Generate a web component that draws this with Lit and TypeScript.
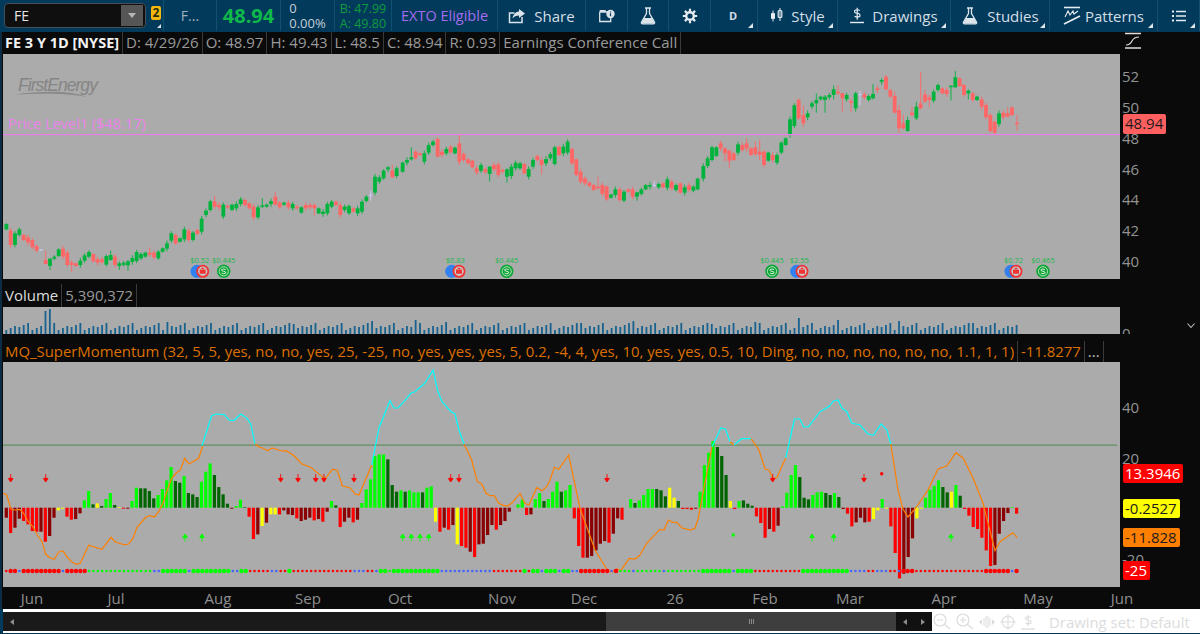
import { LitElement, html, css, svg } from 'lit';
import { customElement } from 'lit/decorators.js';

// candles: [X, open, close, hi?, lo?] read in 3x coords, split in 3 stretches
type C = number[];
const candlesA: C[] = [[19,508,492],[32,512,555],[45,555,520],[58,525,508],[71,525,540],[84,532,548],[97,540,562],[110,558,572],[123,570,570],[137,600,612,572,614],[150,618,596,594,630],[163,596,590],[176,588,568],[189,566,590],[202,578,615],[215,608,615,600,636],[228,610,618],[241,615,602],[254,602,586],[267,590,576],[280,582,604],[293,598,608],[306,598,606],[319,614,588],[332,600,585,572,602],[345,590,615],[358,618,610,604,630],[371,615,608],[384,616,604,600,632],[397,606,594],[410,603,576],[423,595,582],[436,590,578],[449,578,584,562,590],[462,578,592],[475,595,575],[488,575,565],[501,566,550],[514,542,520],[527,525,550],[540,545,535],[553,538,508],[566,512,540],[579,540,518],[592,510,522],[605,515,476],[618,465,452],[631,450,424],[644,424,440,408,446],[657,435,442],[670,470,434],[683,438,442],[696,450,434],[709,445,432],[722,432,418],[735,420,435],[748,430,445],[761,440,472],[774,472,442],[787,440,436,414,444],[800,440,434],[813,432,424],[826,410,434,396,436],[839,428,442],[852,434,428],[865,428,442],[878,445,432],[891,440,445],[904,458,442],[917,435,445],[930,435,442],[943,435,445,430,466],[956,460,445],[969,462,455],[982,460,432],[995,440,425],[1008,425,435],[1021,435,465],[1034,450,440],[1047,460,438],[1060,445,455],[1073,460,445],[1086,455,425],[1099,423,410],[1112,406,406,392,422],[1125,398,350],[1138,365,352],[1151,355,332],[1164,328,322,318,336],[1177,332,352,314,354],[1190,348,325]];
const candlesB: C[] = [[8,215,188],[21,188,180],[34,178,172,142,182],[47,155,175],[60,160,165],[73,185,160],[86,158,135],[99,135,125],[113,117,170,112,172],[126,155,165],[139,160,147],[152,140,157],[165,160,143],[178,130,185,105,195],[191,162,180],[204,178,190],[217,182,202],[230,205,217],[243,212,195],[256,207,217],[269,222,200,198,245],[282,195,208],[295,193,225],[308,210,215],[321,230,208,205,248],[334,228,200],[347,205,188],[360,205,190],[373,192,220],[386,230,207],[399,200,180],[412,168,180],[425,180,195,170,224],[438,190,177],[451,175,162],[464,192,142],[477,140,165],[490,160,140],[503,158,125],[516,147,190],[529,178,225],[542,215,245],[555,235,250],[568,248,258],[581,255,270],[594,260,265,230,268],[607,255,282],[620,260,298],[633,293,284],[646,285,268],[659,268,300],[672,302,275],[685,268,275],[698,268,290],[711,290,277,275,302],[724,282,268],[737,268,255],[750,260,255],[763,256,256,242,262],[776,262,252],[789,250,262],[802,263,238],[815,245,265],[828,270,255],[841,250,278],[854,278,262],[867,255,270],[880,272,260],[893,268,236],[910,236,198],[923,198,175],[936,180,142],[949,168,142],[962,130,145],[975,145,160,142,185],[988,152,182,150,205],[1001,160,180],[1014,158,133],[1027,135,150],[1040,130,145,115,155],[1053,145,165],[1066,142,162,125,170],[1079,155,165,120,180],[1092,155,195,150,203],[1105,182,158],[1118,165,180],[1131,188,165],[1144,158,128],[1157,135,115],[1170,105,58],[1183,78,16],[1196,0,55]];
const candlesC: C[] = [[10,165,190,136,200],[23,172,160],[36,140,130],[49,130,120,100,158],[62,118,110],[75,120,110,105,158],[88,112,105],[101,105,88,76,118],[114,95,100,75,105],[127,100,115,98,155],[140,118,105],[153,123,128,115,155],[167,145,100,95,155],[180,104,104,92,136],[193,103,112],[206,120,108],[219,115,102,72,118],[232,85,90],[245,65,60,54,74],[258,50,88,46,90],[271,90,110],[284,108,158,95,160],[297,150,205,135,218],[310,190,205,165,210],[323,213,180,170,215],[336,158,165,140,170],[349,175,140,125,180],[362,130,145,35,148],[375,103,125,90,128],[388,112,120,105,142],[401,122,95],[414,90,75,70,95],[427,85,100],[440,90,102],[453,79,77,76,122],[466,82,52,33,84],[479,55,78],[492,75,105,72,110],[505,100,92,88,118],[518,100,120],[531,120,110],[545,118,140,110,150],[558,135,172],[571,165,213],[584,185,218,182,222],[597,192,160],[610,158,172],[623,160,170,142,172],[636,142,165],[651,188,192,165,212]];

// momentum histogram, 3x px from the zero line
const histRaw = `M-30 R-76 M-60 M-33 R-40 R-50 R-70 R-72 M-72 R-102 M-85 M-30 Y-8 Y-3 R-27 R-36 M-34 M-17 G22 G50 D10 Y13 D5 G26 G44 D8 Y2 R-3 M-3 G20 G60 D58 D58 D50 D28 G38 G56 G82 G122 D80 D75 G95 D44 D40 D32 G78 G108 G133 D98 D62 D40 D12 M-3 G5 G24 D2 R-27 R-94 M-80 Y-55 M-45 Y-20 Y-20 R-20 M-8 M-20 M-22 R-32 M-40 M-36 M-30 R-38 M-34 R-42 M-12 G20 D7 R-58 M-42 M-30 R-44 M-36 G14 G55 G85 G155 G160 G160 D145 D68 D48
G52 D48 G52 G46 G46 D46 G60 G64 Y-42 R-72 M-60 R-66 M-52 Y-110 R-115 R-120 M-132 R-148 M-110 M-108 M-82 M-52 R-66 M-52 M-40 M-12 G0 G10 G24 R-22 M-20 G26 G44 D20 G26 G48 G78 D48 G52 G68 R-32 R-115 R-150 M-150 M-145 M-128 M-108 M-100 R-105 M-78 M-32 R-36 G0 G26 D14 G22 G38 G56 G56 D56 D52 D34 Y60 Y30 D20 R-4 R-4 R-6 M-3 G48 G128 G165 G200 D182 D155 D98 Y20 R-4 G20 D22 D12 D6 R-26 R-46 R-90 M-64 R-72 M-54 G4 G45 G98 G128 D92
D30 D25 G38 G46 G48 D44 D38 G44 D32 M-4 R-18 R-56 M-44 M-30 M-44 R-42 Y-34 Y-8 G26 Y-3 R-56 R-136 R-212 M-198 M-148 M-92 Y-32 Y-3 G30 G54 G66 G82 D62 D46 Y48 G68 D36 R-4 R-24 R-58 R-64 R-90 R-128 R-175 M-172 M-78 M-40 M-16 G2 R-18`;
const histColors: Record<string, string> = { G: '#00ff00', D: '#006400', R: '#ff0000', M: '#8b0000', Y: '#ffff00' };
const hist = histRaw.trim().split(/\s+/).map((t) => ({ c: histColors[t[0]], v: Number(t.slice(1)) / 3 }));
const barX = (i: number, n: number) => 6.3 + (i * (1016.6 - 6.3)) / (n - 1);

const dotRuns = 'r1R2b1R9b1R5g15b2G6b1G9b2G2r5b2r2G1r14b3r2b1G2g1G2G9b12r7G1r1G2b1G3b1G2b2R7b1R1g3b1g6b1g8G7b1G4r11G11b4r2b3r1r1b1R3r16R6b1R1';
const dots: string[] = [];
for (const m of dotRuns.matchAll(/([a-zA-Z])(\d+)/g)) for (let i = 0; i < Number(m[2]); i++) dots.push(m[1]);

const z4 = (p: number[][]) => p.map(([x, y]) => `${(x / 3).toFixed(1)},${(440 + y / 3).toFixed(1)}`).join(' ');
const pts = (p: number[][]) => p.map(([x, y]) => `${x},${y}`).join(' ');

const orange = [
  z4([[10,160],[20,165],[33,208],[45,210],[60,208],[72,222],[85,245],[100,262],[112,285],[126,305],[137,343],[150,353],[163,358],[176,336],[189,333],[202,352],[215,365],[228,373],[241,370],[266,316],[306,328],[333,292],[346,306],[372,314],[385,313],[398,296],[411,262],[437,232],[450,227],[463,231],[476,215],[489,190],[502,150],[515,115],[528,100],[541,90],[554,55],[567,72],[596,55],[608,18]]),
  z4([[765,10],[775,20],[790,25],[803,32],[816,24],[845,33],[858,32],[880,45],[906,72],[932,82],[975,117],[997,88],[1012,90],[1027,138],[1050,143],[1065,162],[1077,165],[1115,75]]),
  pts([[464,444],[471.7,460],[477.3,481.7],[481.7,484],[486,493.3],[490,495.7],[494.3,495.7],[498.7,503.3],[503.3,505.3],[507.3,506],[511.7,503.3],[520,493.3],[524.7,503.3],[529,505],[536.7,487.7],[542,490.7],[546.7,486.7],[550,480],[554.3,467.3],[558.7,469.3],[568.7,455],[580,508.3],[595,550],[607.3,570],[612,572],[617,569],[620.7,570.7],[629.3,558.3],[635,559],[640,555],[646.7,543.3],[660,529.3],[664,530],[668.3,520],[672.7,522.3],[676.7,522.3],[682,528],[690.7,530],[695,528.3],[698.3,518.3],[701.7,500],[712,446.7]]),
  pts([[730,441.7],[734,445]]),
  pts([[751,438.7],[759,450],[765,469],[769,470],[772.7,478],[776.7,478],[785.7,458]]),
  pts([[890.8,444],[898,490],[903,509],[908,517],[915,509],[928,490],[938,469],[946.7,466],[956,452.7],[963,458],[973,478],[983,503],[995,550.7],[1000,541.7],[1012.7,532.7],[1017.3,537.7]]),
];
const cyan = [
  pts([[202,445.7],[211.6,415.7],[216,414],[224,414.7],[229.6,420.3],[234,420.3],[241,414],[247,418.3],[250.7,424],[254.9,444]]),
  pts([[371.7,465],[375,448],[379,428],[390,400.7],[394,408],[398,408],[404,401.7],[411,393],[415,391.7],[425,383],[433,370],[438,391.7],[442,401.7],[451,411.7],[455,414],[459,430],[464,444]]),
  pts([[712,446.7],[721,428],[725.5,429],[730,441.7]]),
  pts([[734,445],[741.6,438.7],[751,438.7]]),
  pts([[785.7,458],[788,448],[794.4,419],[799.8,419],[803.6,427],[808.6,426.7],[820,411.7],[829.6,406],[833.4,401],[838,400],[841.9,408],[846.8,411.7],[851.8,423],[860,425],[867.9,434],[873.6,435],[881,424],[887,430],[890.8,444]]),
];

const redArrows = [10.7, 45.7, 280.7, 298, 315.7, 324, 354, 450.7, 459, 607, 772.7, 864];
const greenArrows = [185, 202, 402.7, 411.3, 420, 428.7, 812, 833.7, 951];

const events = [
  { x: 197, red: 202.7, label: '$0.52' },
  { x: 223.7, label: '$0.445' },
  { x: 451.7, red: 459, label: '$0.83' },
  { x: 506.7, label: '$0.445' },
  { x: 772, label: '$0.445' },
  { x: 796.7, red: 802, label: '$2.55' },
  { x: 1011, red: 1016, label: '$0.72' },
  { x: 1043, label: '$0.465' },
];

const volSpikes: Record<number, number> = { 9: 23, 10: 25, 37: 12, 66: 10, 84: 13, 94: 14, 101: 12, 132: 11, 144: 13, 162: 10, 172: 12, 182: 16, 191: 14, 205: 13, 222: 11 };
const volumes = Array.from({ length: 233 }, (_, i) => volSpikes[i] ?? 4 + ((i * 37) % 6) + ((i * 13) % 3));

const flask = svg`<path d="M6 1h6M7.5 1.5v5L2.5 15a1.2 1.2 0 0 0 1 1.8h11a1.2 1.2 0 0 0 1-1.8l-5-8.5v-5" fill="none" stroke="#dbe4ea" stroke-width="1.3"/><path d="M5 11h8l2.3 4.6a.6.6 0 0 1-.5.9H3.2a.6.6 0 0 1-.5-.9z" fill="#dbe4ea"/>`;

@customElement('app-root')
export class AppRoot extends LitElement {
  static styles = css`
    :host {
      display: block;
      width: 1200px;
      height: 634px;
      overflow: hidden;
      background: #023a5c;
      font-family: 'Open Sans', sans-serif;
    }
    svg { display: block; }
    svg text { font-family: 'Open Sans', sans-serif; }
    svg .logo { font-family: 'Liberation Sans', sans-serif; }

    /* toolbar */
    .toolbar {
      display: grid;
      grid-template-columns: 164px 53px 64px 54px 57px 106px 88px 42px 41px 42px 47px 80px 113px 99px 108px 42px;
      height: 32px;
      padding-bottom: 1px;
      box-sizing: border-box;
      background: #023a5c;
      color: #d5dfe6;
      font-size: 15px;
    }
    .cell {
      position: relative;
      display: flex;
      align-items: center;
      justify-content: center;
      gap: 8px;
      border-right: 1px solid #11506f;
      white-space: nowrap;
    }
    .tight { gap: 4px; }
    .corner::after {
      content: '';
      position: absolute;
      right: 4px;
      bottom: 3px;
      border-style: solid;
      border-width: 0 0 5px 5px;
      border-color: transparent transparent #dfe6ea transparent;
    }
    .first { justify-content: flex-start; padding-left: 4px; gap: 5px; }
    .combo {
      display: flex;
      align-items: center;
      justify-content: space-between;
      width: 142px;
      height: 25px;
      box-sizing: border-box;
      padding: 0 2px 0 9px;
      background: #0f0f0f;
      border: 1px solid #46505a;
      border-radius: 4px;
      color: #e4e4e4;
      font-size: 14px;
    }
    .combo i {
      display: flex;
      align-items: center;
      justify-content: center;
      width: 22px;
      height: 21px;
      background: #565656;
    }
    .combo i::before {
      content: '';
      border-style: solid;
      border-width: 5px 4px 0 4px;
      border-color: #b5b5b5 transparent transparent transparent;
    }
    .link {
      width: 10px;
      height: 14px;
      margin-bottom: 5px;
      background: #f2b90c;
      border-radius: 2px;
      color: #2c2c10;
      font-size: 12px;
      font-weight: 700;
      line-height: 14px;
      text-align: center;
    }
    .first.corner::after { right: 2px; bottom: 3px; border-width: 0 0 4px 4px; }
    .fname { color: #9db1bf; font-size: 14px; }
    .last { color: #0fb84a; font-size: 20px; font-weight: 700; }
    .stack {
      display: flex;
      flex-direction: column;
      justify-content: center;
      line-height: 15px;
      font-size: 13px;
    }
    .chg { color: #c4ced5; align-items: flex-start; }
    .bidask { color: #0d9c3d; font-size: 12.5px; }
    .exto { color: #a46cf0; font-size: 14.5px; }
    .day { font-size: 11px; font-weight: 700; margin-right: 2px; }

    /* panes */
    .main {
      height: 577px;
      padding-left: 1px;
      border-left: 2px solid #0c2c44;
      background: #0a0a0a;
    }
    .pane {
      display: grid;
      grid-template-columns: 1117px 80px;
    }
    .vol-pane { margin-top: 5px; }
    .study-pane { margin-top: 2px; }
    .legend {
      display: flex;
      align-items: stretch;
      height: 22px;
      font-size: 15px;
      line-height: 21px;
      color: #9a9a9a;
      white-space: nowrap;
    }
    .legend span {
      padding: 0 3px;
      border-right: 1px solid #3a3a3a;
    }
    .legend span:first-child { padding-left: 2px; }
    .legend .title { color: #f2f2f2; font-weight: 700; font-size: 14.5px; }
    .legend .white { color: #dedede; }
    .vol-pane .legend { height: 23px; line-height: 23px; }
    .study-pane .legend { height: 26px; align-items: flex-end; color: #dd7000; font-size: 14.9px; }
    .study-pane .legend .more { color: #c0c0c0; }
    .axis { grid-row: 1 / span 2; grid-column: 2; }
    .plot { background: #ababab; }

    /* bottom */
    .scroll {
      display: flex;
      align-items: stretch;
      height: 19px;
      border-top: 3px solid #ffffff;
      border-bottom: 2px solid #ffffff;
      background: #1a1a1a;
    }
    .track { display: flex; align-items: center; padding-left: 7px; width: 603px; box-sizing: border-box; }
    .thumb { display: flex; align-items: center; justify-content: center; width: 290px; background: #3e3e3e; }
    .grip { width: 5px; height: 5px; background: repeating-linear-gradient(90deg, #8a8a8a 0 1px, transparent 1px 2px); }
    .btns { display: flex; align-items: center; justify-content: space-around; width: 36px; background: #111; }
    .tri-l, .tri-r { border-style: solid; border-color: transparent; }
    .tri-l { border-width: 3px 4px 3px 0; border-right-color: #8d8d8d; }
    .tri-r { border-width: 3px 0 3px 4px; border-left-color: #8d8d8d; }
    .tools {
      display: flex;
      flex: 1;
      align-items: center;
      gap: 5px;
      padding-left: 1px;
      background: #fff;
      color: #dcdcdc;
      font-size: 14.9px;
    }
    .tools span { margin-left: 9px; }
  `;

  private renderCandle(base: number, baseY: number, c: C, i: number) {
    const [X, o, cl] = c;
    const x = base + X / 3;
    const top = baseY + Math.min(o, cl) / 3;
    const bot = baseY + Math.max(o, cl) / 3;
    const hi = c[3] !== undefined ? baseY + c[3] / 3 : top - 1 - ((i * 7) % 4) * 0.6;
    const lo = c[4] !== undefined ? baseY + c[4] / 3 : bot + 1 + ((i * 11) % 4) * 0.6;
    if (o === cl) {
      return svg`<path d="M${x} ${hi}V${lo}M${x - 2} ${top}h4" stroke="#c9c9f5" fill="none"/>`;
    }
    const col = o > cl ? '#00b33c' : '#ff6666';
    return svg`<path d="M${x} ${hi}V${lo}" stroke=${col} stroke-width="0.9"/><rect x=${x - 1.9} y=${top} width="3.8" height=${Math.max(bot - top, 1.5)} fill=${col}/>`;
  }

  private renderPrice() {
    return html`<svg class="plot" width="1117" height="225" viewBox="3 54 1117 225">
      <text class="logo" x="18" y="91" font-size="17.6" font-style="italic" letter-spacing="-1" fill="#858585">FirstEnergy</text>
      <path d="M15 94.5C45 90 75 91 88 97.5C75 93.5 45 93 15 94.5Z" fill="#8a8a8a"/>
      ${candlesA.map((c, i) => this.renderCandle(0, 60, c, i))}
      ${candlesB.map((c, i) => this.renderCandle(400, 100, c, i))}
      ${candlesC.map((c, i) => this.renderCandle(800, 60, c, i))}
      <rect x="3" y="134" width="1117" height="1.2" fill="#e87fe8"/>
      <text x="8" y="129" font-size="14.5" fill="#ee82ee">Price Level1 ($48.17)</text>
      ${events.map((e) => {
        const center = e.red !== undefined ? (e.x + e.red) / 2 : e.x;
        return svg`<text x=${center} y="263" font-size="7.5" text-anchor="middle" fill="#19b84c">${e.label}</text>
        ${e.red !== undefined
          ? svg`<circle cx=${e.x} cy="271.3" r="6.5" fill="#3182f0"/>
            <circle cx=${e.red} cy="271.3" r="5.6" fill="#c9c9c9" stroke="#ee3333" stroke-width="1.8"/>
            <path d="M${e.red - 3} 269.5h6v4.2h-6zM${e.red - 2} 269l2-1.8 2 1.8" fill="#ee3333"/>`
          : svg`<circle cx=${e.x} cy="271.3" r="6.7" fill="#0aa534"/>
            <circle cx=${e.x} cy="271.3" r="4.6" fill="none" stroke="#c5e5cc" stroke-width="0.9"/>
            <path d="M${e.x + 2} 269.6q-2-1.3-4 0q-.6 1.5 2 1.7q2.6.3 2 1.8q-2 1.3-4 0" fill="none" stroke="#d5ecd9" stroke-width="1"/>`}`;
      })}
    </svg>`;
  }

  private renderVolume() {
    return html`<svg class="plot" width="1117" height="27" viewBox="3 307 1117 27">
      ${volumes.map((h, i) => svg`<rect x=${barX(i, volumes.length) - 0.9} y=${334 - h} width="1.8" height=${h} fill="#17628e"/>`)}
    </svg>`;
  }

  private renderStudy() {
    const zero = 507.7;
    return html`<svg class="plot" width="1117" height="225" viewBox="3 362 1117 225">
      <rect x="3" y="444.6" width="1114" height="1" fill="#4f8a4f"/>
      ${hist.map((b, i) => {
        const x = barX(i, hist.length) - 1.6;
        const h = Math.abs(b.v);
        return svg`<rect x=${x} y=${b.v > 0 ? zero - h : zero} width="3.2" height=${h} fill=${b.c}/>`;
      })}
      ${orange.map((p) => svg`<polyline points=${p} fill="none" stroke="#ff8000" stroke-width="1.2"/>`)}
      ${cyan.map((p) => svg`<polyline points=${p} fill="none" stroke="#00ffff" stroke-width="1.2"/>`)}
      ${dots.map((d, i) => svg`<circle cx=${barX(i, dots.length)} cy="571" r=${d === d.toUpperCase() ? 2.2 : 1.3} fill=${{ r: '#ff0000', b: '#4466ff', g: '#00ff00' }[d.toLowerCase()]}/>`)}
      ${redArrows.map((x) => svg`<path d="M${x} 474v6M${x - 2.3} 478.4h4.6l-2.3 3.6z" stroke="#ff0000" stroke-width="0.9" fill="#ff0000"/>`)}
      ${greenArrows.map((x) => svg`<path d="M${x} 541.5v-5M${x - 2.3} 537.6h4.6l-2.3-3.6z" stroke="#00ff00" stroke-width="0.9" fill="#00ff00"/>`)}
      <circle cx="881.7" cy="473.7" r="1.7" fill="#ff0000"/>
      <circle cx="733.3" cy="535" r="1.7" fill="#00ff00"/>
    </svg>`;
  }

  private badge(y: number, w: number, bg: string, fg: string, label: string) {
    return svg`<rect x="1123" y=${y} width=${w} height="19" rx="2" fill=${bg}/>
      <text x="1125" y=${y + 15} font-size="15" fill=${fg}>${label}</text>`;
  }

  render() {
    const tick = (x: number, y: number, t: string) => svg`<text x=${x} y=${y} font-size="15" fill="#939393">${t}</text>`;
    const months: [number, string][] = [[32, 'Jun'], [116, 'Jul'], [218, 'Aug'], [308, 'Sep'], [400, 'Oct'], [502, 'Nov'], [584, 'Dec'], [675, '26'], [765, 'Feb'], [850, 'Mar'], [944, 'Apr'], [1038, 'May'], [1122, 'Jun']];

    return html`
      <div class="toolbar">
        <div class="cell first corner"><div class="combo">FE<i></i></div><div class="link">2</div></div>
        <div class="cell"><span class="fname">F...</span></div>
        <div class="cell"><span class="last">48.94</span></div>
        <div class="cell"><div class="stack chg"><span>0</span><span>0.00%</span></div></div>
        <div class="cell"><div class="stack bidask"><span>B: 47.99</span><span>A: 49.80</span></div></div>
        <div class="cell"><span class="exto">EXTO Eligible</span></div>
        <div class="cell">
          <svg width="18" height="16" viewBox="0 0 18 16"><path d="M14 9v5.5H1.5V5h5" fill="none" stroke="#dbe4ea" stroke-width="1.5"/><path d="M11 1l6 4.5-6 4.5V7.5c-3 0-5 1-6.5 3C5 7 7 4 11 3.5z" fill="#dbe4ea"/></svg>
          <span>Share</span>
        </div>
        <div class="cell">
          <svg width="16" height="14" viewBox="0 0 16 14"><path d="M.7 3h10M.7 3v9.5h11V9" fill="none" stroke="#dbe4ea" stroke-width="1.3"/><path d="M.7 1h6v2h-6z" fill="#dbe4ea"/><circle cx="11.5" cy="5" r="4.2" fill="#dbe4ea"/><path d="M11.5 2.5v.9M11.5 4.3v3" stroke="#023a5c" stroke-width="1.2"/></svg>
        </div>
        <div class="cell"><svg width="18" height="18" viewBox="0 0 18 18">${flask}</svg></div>
        <div class="cell">
          <svg width="16" height="16" viewBox="0 0 16 16"><circle cx="8" cy="8" r="3.8" fill="none" stroke="#e6ecf0" stroke-width="2.4"/><path d="M8 .8v3M8 12.2v3M.8 8h3M12.2 8h3M2.9 2.9 5 5M11 11l2.1 2.1M2.9 13.1 5 11M11 5l2.1-2.1" stroke="#e6ecf0" stroke-width="2.2"/></svg>
        </div>
        <div class="cell corner"><span class="day">D</span></div>
        <div class="cell corner">
          <svg width="13" height="17" viewBox="0 0 13 17"><path d="M3 3.5v11M10 1v13" stroke="#e6ecf0"/><rect x="1" y="6" width="4" height="6" rx="1" fill="#e6ecf0"/><rect x="8.2" y="3.5" width="3.6" height="7" rx="1" fill="none" stroke="#e6ecf0" stroke-width="1.2"/></svg>
          <span>Style</span>
        </div>
        <div class="cell corner">
          <svg width="14" height="17" viewBox="0 0 14 17"><path d="M0 15.5h14" stroke="#e6ecf0" stroke-width="1.4"/><path d="M9.8 3.6Q7 1.9 4.7 3.6q-.8 2.3 2.4 2.6 3.4.4 2.8 3-2.5 1.8-5.3 0M7.2 .7v12" fill="none" stroke="#e6ecf0" stroke-width="1.2"/></svg>
          <span>Drawings</span>
        </div>
        <div class="cell corner"><svg width="18" height="18" viewBox="0 0 18 18">${flask}</svg><span>Studies</span></div>
        <div class="cell corner tight">
          <svg width="18" height="20" viewBox="0 0 18 20"><path d="M1 1.5h16" stroke="#e6ecf0" stroke-width="1.6"/><path d="M2 11 5 5l2 4 3-4 1 3 4-3" fill="none" stroke="#e6ecf0" stroke-width="1.1"/><path d="M1 18 17 10" stroke="#e6ecf0" stroke-width="1.6"/></svg>
          <span>Patterns</span>
        </div>
        <div class="cell corner">
          <svg width="14" height="12" viewBox="0 0 14 12"><path d="M4 1.5h10M4 6h10M4 10.5h10" stroke="#e6ecf0" stroke-width="1.3"/><path d="M0 .5h2v2H0zM0 5h2v2H0zM0 9.5h2v2H0z" fill="#e6ecf0"/></svg>
        </div>
      </div>

      <div class="main">
        <div class="pane">
          <div class="legend">
            <span class="title">FE 3 Y 1D [NYSE]</span><span>D: 4/29/26</span><span>O: 48.97</span><span>H: 49.43</span><span>L: 48.5</span><span>C: 48.94</span><span>R: 0.93</span><span>Earnings Conference Call</span>
          </div>
          ${this.renderPrice()}
          <svg class="axis" width="80" height="247" viewBox="1120 32 80 247">
            <path d="M1125 33.5h16M1125 48h16" stroke="#e0e0e0" stroke-width="1.6"/>
            <path d="M1126 45q4 0 6-4t7-4" fill="none" stroke="#e0e0e0" stroke-width="1.1"/>
            ${[[52, 82], [50, 113], [48, 144], [46, 175], [44, 205], [42, 236], [40, 267]].map(([v, y]) => tick(1122, y, String(v)))}
            <rect x="1123" y="114" width="43" height="20" rx="2" fill="#ff5f5f"/>
            <text x="1125" y="129" font-size="15" fill="#1c1c1c">48.94</text>
          </svg>
        </div>

        <div class="pane vol-pane">
          <div class="legend"><span class="white">Volume</span><span>5,390,372</span></div>
          ${this.renderVolume()}
          <svg class="axis" width="80" height="50" viewBox="1120 284 80 50">
            ${tick(1122, 339, '0')}
            <path d="M1187.5 323.5l3.5 4 3.5-4" fill="none" stroke="#bdbdbd" stroke-width="1.1"/>
          </svg>
        </div>

        <div class="pane study-pane">
          <div class="legend">
            <span>MQ_SuperMomentum (32, 5, 5, yes, no, no, yes, 25, -25, no, yes, yes, yes, 5, 0.2, -4, 4, yes, 10, yes, yes, 0.5, 10, Ding, no, no, no, no, no, no, 1.1, 1, 1)</span><span>-11.8277</span><span class="more">...</span>
          </div>
          ${this.renderStudy()}
          <svg class="axis" width="80" height="251" viewBox="1120 336 80 251">
            ${tick(1122, 413, '40')}
            ${tick(1122, 464, '20')}
            ${tick(1122, 565, '-20')}
            ${this.badge(464, 60, '#ff0000', '#ffffff', '13.3946')}
            ${this.badge(499, 57, '#ffff00', '#1c1c1c', '-0.2527')}
            ${this.badge(528, 57, '#ff7f00', '#1c1c1c', '-11.828')}
            ${this.badge(561, 27, '#ff0000', '#ffffff', '-25')}
          </svg>
        </div>

        <svg width="1197" height="22" viewBox="3 587 1197 22">
          ${months.map(([x, m]) => svg`<text x=${x} y="604" font-size="15" text-anchor="middle" fill="#8f8f8f">${m}</text>`)}
        </svg>

        <div class="scroll">
          <div class="track"><div class="tri-l"></div></div>
          <div class="thumb"><div class="grip"></div></div>
          <div class="btns"><div class="tri-l"></div><div class="tri-r"></div></div>
          <div class="tools">
            <svg width="18" height="17" viewBox="0 0 18 17"><circle cx="7" cy="7" r="6" fill="none" stroke="#dcdcdc" stroke-width="1.2"/><path d="M4 7h6M11 11l6 5" stroke="#dcdcdc" stroke-width="1.2"/></svg>
            <svg width="18" height="17" viewBox="0 0 18 17"><circle cx="7" cy="7" r="6" fill="none" stroke="#dcdcdc" stroke-width="1.2"/><path d="M4 7h6M7 4v6M11 11l6 5" stroke="#dcdcdc" stroke-width="1.2"/></svg>
            <svg width="16" height="12" viewBox="0 0 16 12"><path d="M0 6l3-3v6zM16 6l-3-3v6z" fill="#dcdcdc"/><path d="M5 2v8M7 0v12M9 0v12M11 2v8" stroke="#dcdcdc"/></svg>
            <svg width="16" height="16" viewBox="0 0 16 16"><circle cx="8" cy="8" r="5.8" fill="none" stroke="#dcdcdc" stroke-width="1.2"/><path d="M8 0v16M0 8h16" stroke="#dcdcdc"/></svg>
            <svg width="14" height="16" viewBox="0 0 14 16"><path d="M0 15h14" stroke="#dcdcdc" stroke-width="1.3"/><path d="M10 3.5Q7 2 4.5 3.5q-.8 2.2 2.500 2.500 3.500.4 3 3-2.500 1.700-5.500 0M7.200 1v11" fill="none" stroke="#dcdcdc" stroke-width="1.1"/></svg>
            <span>Drawing set: Default</span>
          </div>
        </div>
      </div>
    `;
  }
}
